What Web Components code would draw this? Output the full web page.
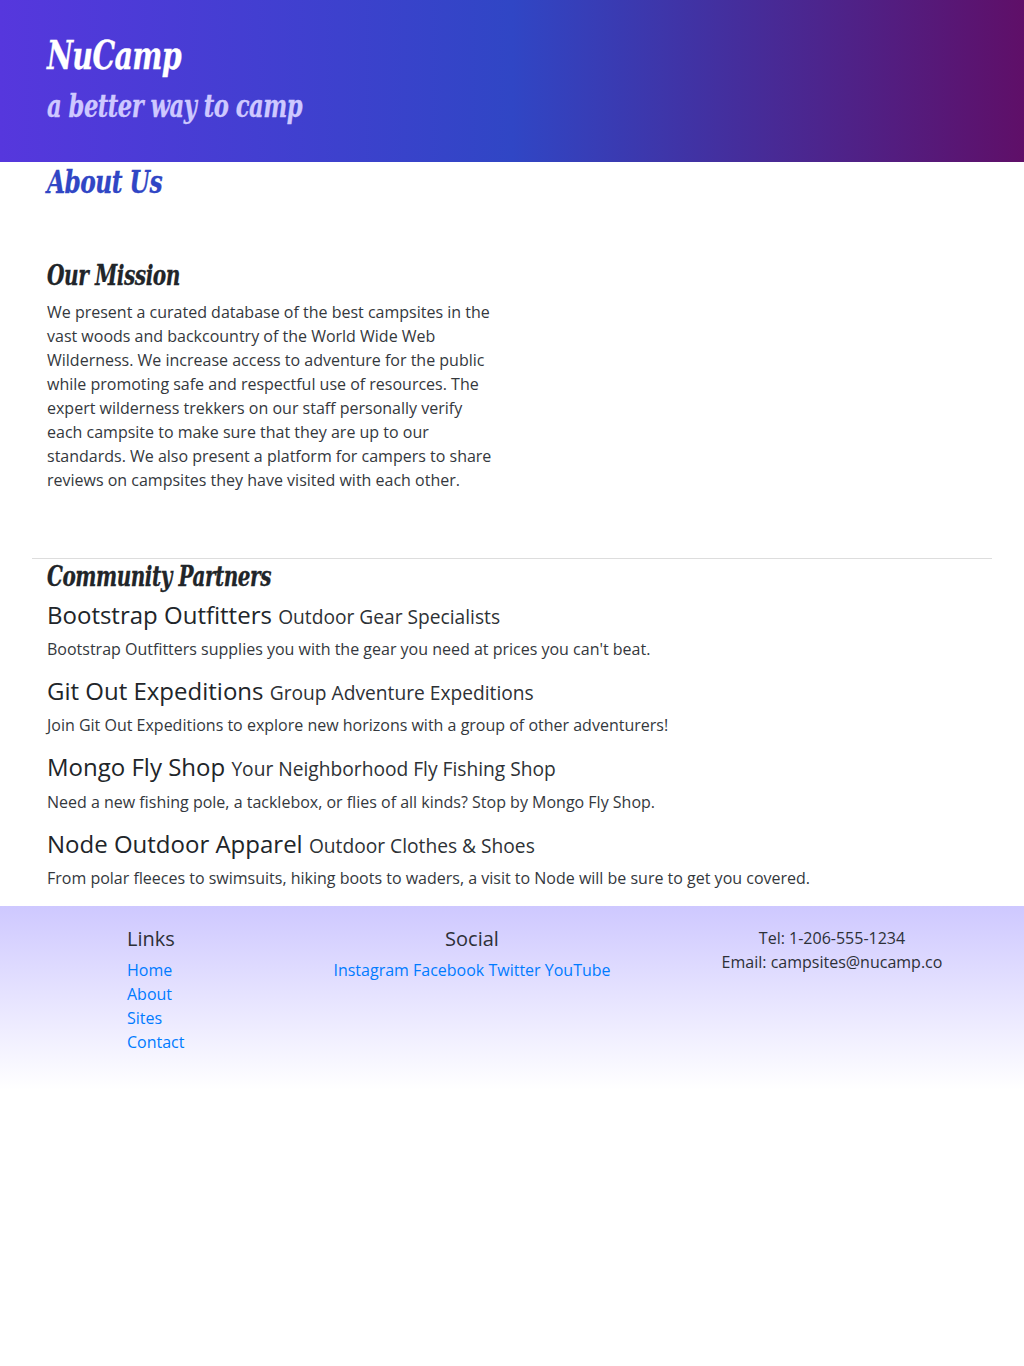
<!DOCTYPE html>
<html lang="en"><head><meta charset="utf-8"><title>NuCamp</title>
<style>
body{margin:0;background:#fff;color:#212529;font:400 16px/1.5 "Open Sans","Liberation Sans",sans-serif}
</style></head><body>
<nucamp-page></nucamp-page>
<script>
// Script heading whose letters are condensed to a given line width.
class ScriptHeading extends HTMLElement{
  connectedCallback(){
    const level=this.getAttribute('level')||'3';
    this.attachShadow({mode:'open'}).innerHTML=`<style>
      :host{display:block}
      h1,h2,h3{margin:0 0 8px;font-family:"DejaVu Serif Condensed","DejaVu Serif",serif;font-stretch:condensed;font-style:italic;font-weight:700;line-height:1.2;white-space:nowrap;letter-spacing:-.02em;-webkit-text-stroke:.3px currentColor}
      h1{font-size:40px}h2{font-size:32px}h3{font-size:28px}
      span{display:inline-block;transform-origin:0 50%}
    </style><h${level}><span><slot></slot></span></h${level}>`;
    const span=this.shadowRoot.querySelector('span');
    const drop=this.getAttribute('drop')||1;
    span.style.transform=`translateY(${drop}px) scaleX(${+this.getAttribute('fit')/span.getBoundingClientRect().width})`;
  }
}
class SiteHeader extends HTMLElement{
  constructor(){super();this.attachShadow({mode:'open'}).innerHTML=`<style>
    :host{display:block;background:linear-gradient(to right,#5637dd,#3046c5 50%,#5f0f68);color:#fff;padding:30px 0}
    div{width:930px;margin:0 auto}
    .tag{color:#cec8ff}
  </style><div><script-heading level="1" fit="134">NuCamp</script-heading><script-heading class="tag" level="2" fit="255">a better way to camp</script-heading></div>`}
}
class PartnerItem extends HTMLElement{
  constructor(){super();this.attachShadow({mode:'open'}).innerHTML=`<style>
    :host{display:block}
    h4{font-size:24px;font-weight:400;line-height:28.25px;margin:0 0 8px}
    small{font-size:19.2px;line-height:1;color:#2d3135}
    p{margin:0 0 16px;color:#34383d}
  </style><h4><slot name="name"></slot> <small><slot name="kind"></slot></small></h4><p><slot></slot></p>`}
}
class SiteFooter extends HTMLElement{
  constructor(){super();this.attachShadow({mode:'open'}).innerHTML=`<style>
    :host{display:block;background:linear-gradient(#cec8ff,#fff);padding:20px 0;color:#2d3038}
    .row{width:960px;margin:0 auto;display:grid;grid-template-columns:160px 400px 320px;padding-left:80px;box-sizing:border-box}
    .row>div{padding:0 15px}.mid{text-align:center}
    h5{font-size:20px;line-height:26px;font-weight:400;margin:0 0 6px}
    ul{list-style:none;margin:0 0 16px;padding:0}
    a{color:#007bff;text-decoration:none}
  </style><div class="row">
    <div><h5>Links</h5><ul><li><a href="#">Home</a></li><li><a href="#">About</a></li><li><a href="#">Sites</a></li><li><a href="#">Contact</a></li></ul></div>
    <div class="mid"><h5>Social</h5><a href="#">Instagram</a> <a href="#">Facebook</a> <a href="#">Twitter</a> <a href="#">YouTube</a></div>
    <div class="mid">Tel: 1-206-555-1234<br>Email: campsites@nucamp.co</div>
  </div>`}
}
class NucampPage extends HTMLElement{
  constructor(){super();this.attachShadow({mode:'open'}).innerHTML=`<style>
    :host{display:block}
    main{width:960px;margin:0 auto}
    .title{padding:0 15px;color:#3046c5}
    .mission{padding:50px 15px;border-bottom:1px solid #ddd}
    .mission p{width:450px;margin:0 0 16px;color:#34383d}
    .partners{padding:0 15px}
  </style><site-header></site-header><main>
    <script-heading class="title" level="2" fit="115">About Us</script-heading>
    <section class="mission"><script-heading drop="0" fit="133">Our Mission</script-heading>
    <p>We present a curated database of the best campsites in the vast woods and backcountry of the World Wide Web Wilderness. We increase access to adventure for the public while promoting safe and respectful use of resources. The expert wilderness trekkers on our staff personally verify each campsite to make sure that they are up to our standards. We also present a platform for campers to share reviews on campsites they have visited with each other.</p></section>
    <section class="partners"><script-heading fit="224">Community Partners</script-heading>
    <partner-item><span slot="name">Bootstrap Outfitters</span><span slot="kind">Outdoor Gear Specialists</span>Bootstrap Outfitters supplies you with the gear you need at prices you can't beat.</partner-item>
    <partner-item><span slot="name">Git Out Expeditions</span><span slot="kind">Group Adventure Expeditions</span>Join Git Out Expeditions to explore new horizons with a group of other adventurers!</partner-item>
    <partner-item><span slot="name">Mongo Fly Shop</span><span slot="kind">Your Neighborhood Fly Fishing Shop</span>Need a new fishing pole, a tacklebox, or flies of all kinds? Stop by Mongo Fly Shop.</partner-item>
    <partner-item><span slot="name">Node Outdoor Apparel</span><span slot="kind">Outdoor Clothes &amp; Shoes</span>From polar fleeces to swimsuits, hiking boots to waders, a visit to Node will be sure to get you covered.</partner-item>
    </section></main><site-footer></site-footer>`}
}
customElements.define('script-heading',ScriptHeading);
customElements.define('site-header',SiteHeader);
customElements.define('partner-item',PartnerItem);
customElements.define('site-footer',SiteFooter);
customElements.define('nucamp-page',NucampPage);
</script></body></html>
